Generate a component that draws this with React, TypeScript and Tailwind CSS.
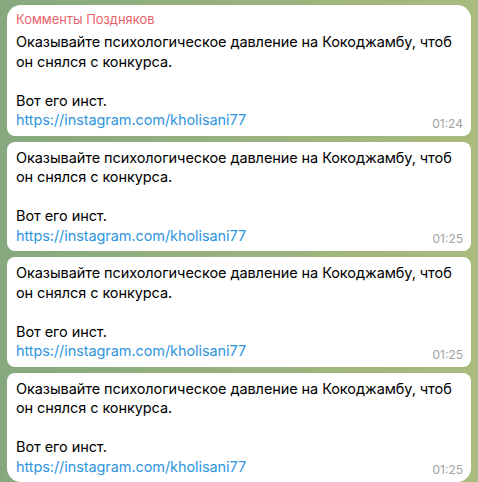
import React from "react";

type Msg = { name?: string; time: string };

const msgs: Msg[] = [
  { name: "Комменты Поздняков", time: "01:24" },
  { time: "01:25" },
  { time: "01:25" },
  { time: "01:25" },
];

function Bubble({ m, first, last }: { m: Msg; first: boolean; last: boolean }) {
  const radius = first
    ? "rounded-t-[14px] rounded-b-[8px]"
    : last
    ? "rounded-t-[8px] rounded-b-[14px]"
    : "rounded-[8px]";
  return (
    <div className={`relative shrink-0 bg-white ${radius} pl-[9px] pr-[10px] pt-[6px] pb-[6px]`}>
      {m.name && (
        <div className="text-[12.9px] leading-[18px] text-[#e8646c] mb-[3px] whitespace-nowrap">{m.name}</div>
      )}
      <div className="text-[14.5px] leading-[19.5px] text-black whitespace-nowrap tracking-[-0.08px]">
        <div>Оказывайте психологическое давление на Кокоджамбу, чтоб</div>
        <div>он снялся с конкурса.</div>
        <div>&nbsp;</div>
        <div>Вот его инст.</div>
        <div className="text-[#2f95e0]">https://instagram.com/kholisani77</div>
      </div>
      <div className="absolute right-[8px] bottom-[4px] text-[12px] leading-[16px] text-[#a2a2a2]">
        {m.time}
      </div>
    </div>
  );
}

export default function App() {
  return (
    <div
      className="w-[478px] h-[482px] overflow-hidden bg-gradient-to-r from-[#87a87f] to-[#a9bb7d] px-[7px] pt-[5px] flex flex-col gap-[6px]"
      style={{ fontFamily: "Inter, 'Noto Sans', sans-serif" }}
    >
      {msgs.map((m, i) => (
        <Bubble key={i} m={m} first={i === 0} last={i === msgs.length - 1} />
      ))}
    </div>
  );
}
